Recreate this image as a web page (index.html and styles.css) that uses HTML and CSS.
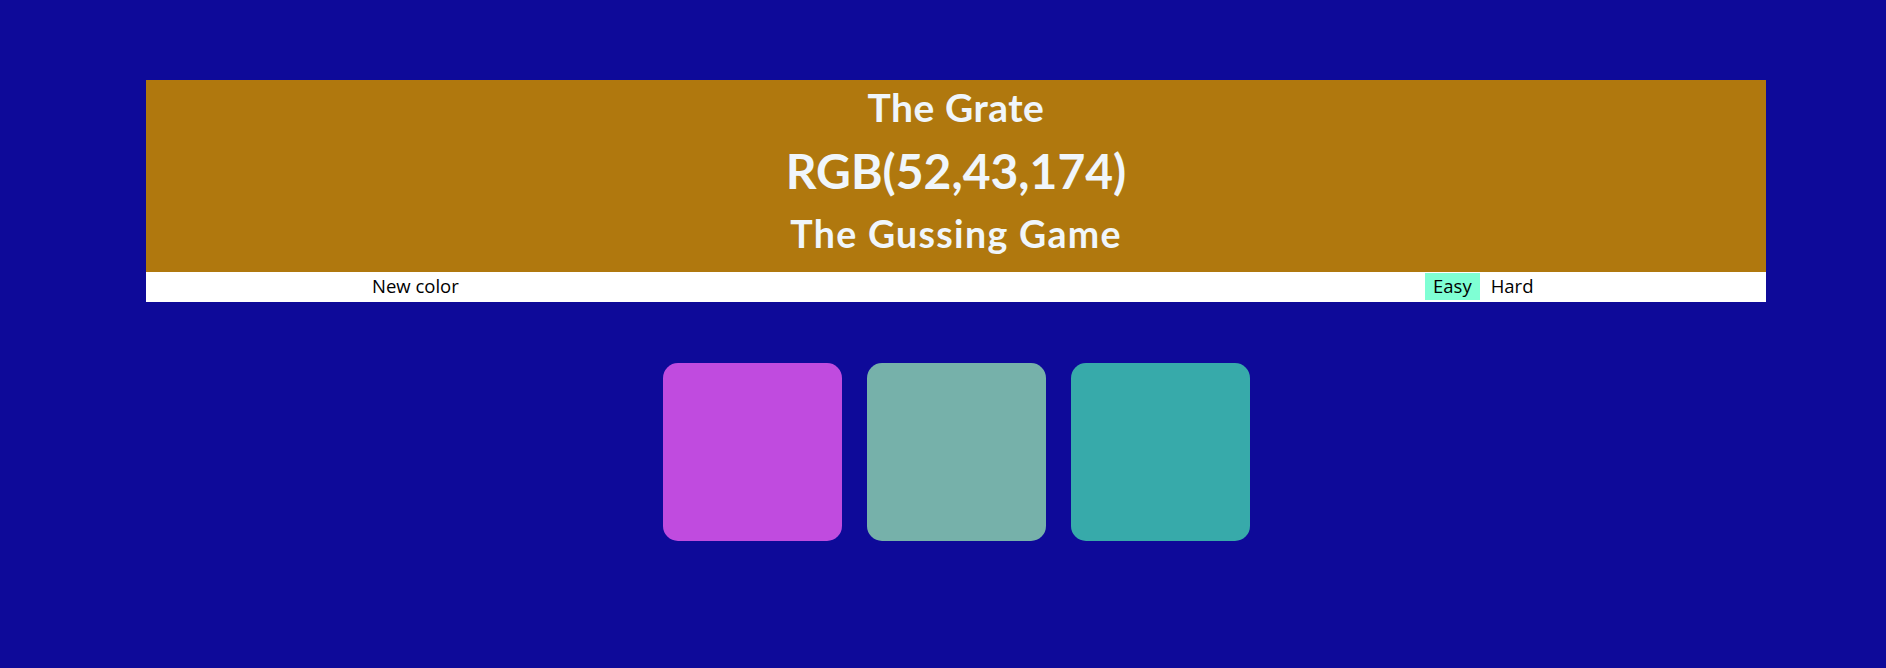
FILE: index.html
```html
<!DOCTYPE html>
<html lang="en">
<head>
<meta charset="utf-8">
<title>The Gussing Game</title>
<link rel="stylesheet" href="styles.css">
</head>
<body>
<div class="page">
  <header class="banner">
    <h1 class="title">The Grate</h1>
    <div class="rgb">RGB(52,43,174)</div>
    <h2 class="subtitle">The Gussing Game</h2>
  </header>
  <nav class="controls">
    <button class="btn">New color</button>
    <div class="modes">
      <button class="btn selected">Easy</button>
      <button class="btn">Hard</button>
    </div>
  </nav>
  <main class="squares">
    <div class="square sq-1"></div>
    <div class="square sq-2"></div>
    <div class="square sq-3"></div>
  </main>
</div>
</body>
</html>
```

FILE: styles.css
```css
html, body {
  margin: 0;
  padding: 0;
  background: #0e0a99;
}

body {
  height: 668px;
  overflow: hidden;
  font-family: "Lato", "Open Sans", sans-serif;
}

.page {
  width: 1620px;
  margin: 80px 0 0 146px;
}

.banner {
  background: #b0780e;
  color: #f0f6fb;
  text-align: center;
  padding: 4px 0 15.5px;
}

.title {
  margin: 0;
  font-size: 39px;
  font-weight: 700;
  letter-spacing: 0.5px;
}

.rgb {
  margin-top: 12px;
  font-size: 48px;
  font-weight: 700;
}

.subtitle {
  margin: 12px 0 0;
  font-size: 37.5px;
  font-weight: 700;
  letter-spacing: 1.3px;
}

.controls {
  background: #ffffff;
  height: 30px;
  display: flex;
  justify-content: space-between;
  align-items: flex-start;
  padding: 0 224px 0 217.5px;
}

.modes {
  display: flex;
  gap: 2px;
}

.btn {
  border: none;
  background: transparent;
  color: #000;
  font-family: "Open Sans", "Noto Sans", sans-serif;
  font-size: 18.5px;
  line-height: 26px;
  height: 27px;
  padding: 0 8.5px;
  margin-top: 1px;
  cursor: pointer;
}

.btn.selected {
  background: #7fffd4;
}

.squares {
  display: flex;
  justify-content: center;
  gap: 25px;
  margin-top: 61px;
}

.square {
  width: 179px;
  height: 178px;
  border-radius: 15px;
}

.sq-1 { background: #c04bdf; }
.sq-2 { background: #76b1aa; }
.sq-3 { background: #37aaaa; }
```
